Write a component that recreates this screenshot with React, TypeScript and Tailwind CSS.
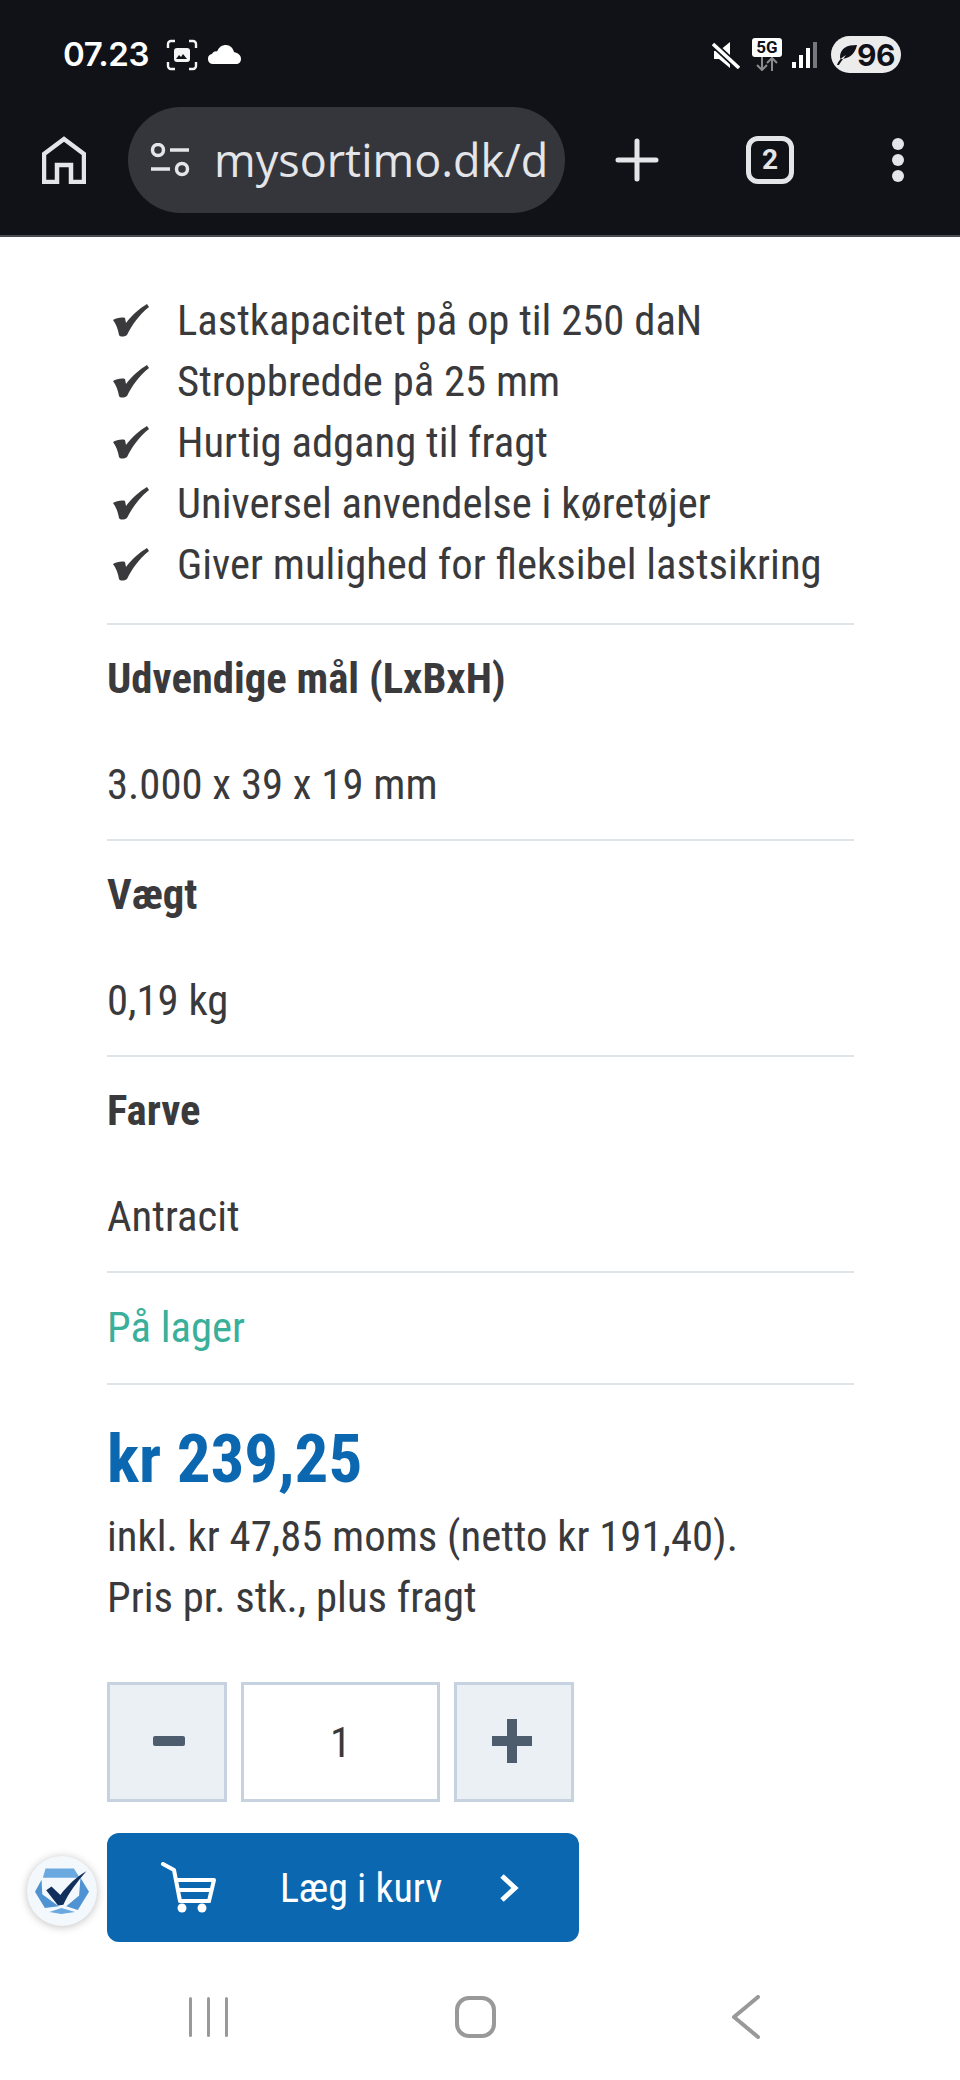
const FONT = "font-['Roboto',sans-serif] [font-stretch:75%]"

const FEATURES = [
  'Lastkapacitet på op til 250 daN',
  'Stropbredde på 25 mm',
  'Hurtig adgang til fragt',
  'Universel anvendelse i køretøjer',
  'Giver mulighed for fleksibel lastsikring',
]

const SPECS = [
  { label: 'Udvendige mål (LxBxH)', value: '3.000 x 39 x 19 mm' },
  { label: 'Vægt', value: '0,19 kg' },
  { label: 'Farve', value: 'Antracit' },
]

function StatusBar() {
  return (
    <div className="h-[107px] flex items-center justify-between pl-[63px] pr-[59px] pt-[2px] text-white">
      <div className="flex items-center">
        <span className="font-['Inter',sans-serif] text-[33px] font-semibold tracking-[-0.4px]">07.23</span>
        <svg width="32" height="32" viewBox="0 0 32 32" className="ml-[17px]" fill="none" stroke="#f4f4f5" strokeWidth="2.4">
          <path d="M2 9V5a3 3 0 0 1 3-3h4M23 2h4a3 3 0 0 1 3 3v4M30 23v4a3 3 0 0 1-3 3h-4M9 30H5a3 3 0 0 1-3-3v-4" />
          <rect x="8" y="9" width="16" height="14" rx="3" fill="#f4f4f5" stroke="none" />
          <path d="M10 20l3-4 2 2 2-3 4 5z" fill="#101217" stroke="none" />
        </svg>
        <svg width="33" height="19" viewBox="0 0 33 19" className="ml-[10px]" fill="#fff">
          <path d="M5 19a5 5 0 0 1-1-9.900C5 7 7 6 9 6.500 11 2 14 0 18 0c4 0 7 3 8 7 4 1 7 3 7 7 0 3-2 5-5 5z" />
        </svg>
      </div>
      <div className="flex items-center">
        <svg width="28" height="28" viewBox="0 0 28 28" fill="#fff">
          <path d="M2 10h5l11-9v26L7 18H2z" />
          <path d="M1 3l26 24" stroke="#101217" strokeWidth="7" />
          <path d="M1 3l26 24" stroke="#fff" strokeWidth="3.500" />
        </svg>
        <div className="ml-[12px] flex flex-col items-center w-[30px]">
          <span className="w-[30px] h-[19px] bg-white rounded-[3px] text-[#101217] text-[17px] leading-[19px] font-bold text-center font-['Roboto',sans-serif]">5G</span>
          <svg width="24" height="14" viewBox="0 0 24 14" fill="none" strokeWidth="2">
            <path d="M7 0v12M2 8l5 5 5-5" stroke="#8a8b8e" />
            <path d="M17 14V2M12 6l5-5 5 5" stroke="#8a8b8e" />
          </svg>
        </div>
        <svg width="25" height="26" viewBox="0 0 25 26" className="ml-[10px]">
          <rect x="0" y="20" width="4" height="6" fill="#fff" />
          <rect x="7" y="13" width="4" height="13" fill="#fff" />
          <rect x="14" y="6" width="4" height="20" fill="#fff" />
          <rect x="21" y="0" width="4" height="26" fill="#77787b" />
        </svg>
        <div className="ml-[14px] w-[70px] h-[37px] rounded-full bg-[#ececec] flex items-center justify-center">
          <svg width="20" height="20" viewBox="0 0 20 20" fill="#101217">
            <path d="M20 0C10 0 4 3 3 11c0 1 0 2 .500 3C12 14 18 9 20 0zM0 20c1-4 4-7 9-10-2 3-5 6-7 10z" />
          </svg>
          <span className="font-['Inter',sans-serif] text-[30px] font-bold text-[#101217] leading-none tracking-[-0.5px]">96</span>
        </div>
      </div>
    </div>
  )
}

function Toolbar() {
  return (
    <div className="h-[130px] flex items-start border-b-[2px] border-[#4a4b50]">
      <div className="w-[128px] h-[106px] flex items-center justify-center">
        <svg width="44" height="48" viewBox="0 0 44 48" fill="none" stroke="#e4e5e9" strokeWidth="4.500">
          <path d="M2 46V18L22 3l20 15v28H29V29H15v17z" />
        </svg>
      </div>
      <div className="w-[437px] h-[106px] rounded-full bg-[#35363b] flex items-center overflow-hidden pl-[22px]">
        <svg width="40" height="34" viewBox="0 0 40 34" fill="none" stroke="#e4e5e9" strokeWidth="3.500" className="shrink-0">
          <circle cx="8" cy="7" r="5.500" />
          <path d="M20 7h19M1 26h19" />
          <circle cx="32" cy="26" r="5.500" />
        </svg>
        <span className="ml-[24px] font-['Open_Sans',sans-serif] text-[45px] text-[#e4e5e9] whitespace-nowrap">mysortimo.dk/d</span>
      </div>
      <div className="flex-1 h-[106px] flex items-center">
        <svg width="44" height="44" viewBox="0 0 44 44" className="ml-[50px]" stroke="#e4e5e9" strokeWidth="5" strokeLinecap="round">
          <path d="M22 3v38M3 22h38" />
        </svg>
        <div className="ml-[87px] w-[48px] h-[48px] rounded-[12px] border-[5px] border-[#e4e5e9] flex items-center justify-center font-['Roboto',sans-serif] text-[28px] font-bold text-[#e4e5e9]">2</div>
        <div className="ml-[98px] flex flex-col gap-[4px]">
          <span className="w-[12px] h-[12px] rounded-full bg-[#e4e5e9]" />
          <span className="w-[12px] h-[12px] rounded-full bg-[#e4e5e9]" />
          <span className="w-[12px] h-[12px] rounded-full bg-[#e4e5e9]" />
        </div>
      </div>
    </div>
  )
}

function Spec({ label, value }: { label: string; value: string }) {
  return (
    <div className="border-b-[2px] border-[#dfe4e8] pt-[23px] pb-[24px]">
      <div className="font-bold">{label}</div>
      <div className="mt-[45px]">{value}</div>
    </div>
  )
}

export default function App() {
  return (
    <div className="relative w-[960px] h-[2080px] bg-white overflow-hidden flex flex-col">
      <div className="bg-[#101217]">
        <StatusBar />
        <Toolbar />
      </div>

      <div className={`flex-1 pl-[107px] pr-[106px] pt-[53px] text-[#3a3a3c] text-[42.7px] leading-[61px] ${FONT}`}>
        <ul className="border-b-[2px] border-[#dfe4e8] pb-[28px]">
          {FEATURES.map(f => (
            <li key={f} className="flex items-center whitespace-nowrap">
              <span className="w-[70px] pl-[6px]">
                <svg width="36" height="33" viewBox="0 0 36 33" className="block" fill="#3a3a3c">
                  <path d="M0 16C3 14 9 13 12 14L13 19C19 11 27 4 34 0L36 3C26 11 19 21 14 31C11 33 7 33 6 31C5 25 3 20 0 16Z" />
                </svg>
              </span>
              {f}
            </li>
          ))}
        </ul>
        {SPECS.map(s => (
          <Spec key={s.label} label={s.label} value={s.value} />
        ))}
        <div className="border-b-[2px] border-[#dfe4e8] pt-[24px] pb-[25px] text-[#3aaf9a]">På lager</div>

        <div className="mt-[38px] text-[67px] leading-[72px] font-bold text-[#0a67b0]">kr 239,25</div>
        <div className="mt-[11px]">inkl. kr 47,85 moms (netto kr 191,40).</div>
        <div>Pris pr. stk., plus fragt</div>

        <div className="mt-[54px] flex gap-[14px]">
          <button className="w-[120px] h-[120px] bg-[#ebf0f5] border-[3px] border-[#c6d2e0] flex items-center justify-center">
            <span className="ml-[3px] mb-[2px] w-[32px] h-[10px] rounded-[2px] bg-[#4e5d6e]" />
          </button>
          <div className="w-[199px] h-[120px] border-[3px] border-[#c6d2e0] flex items-center justify-center">1</div>
          <button className="w-[120px] h-[120px] bg-[#ebf0f5] border-[3px] border-[#c6d2e0] flex items-center justify-center">
            <svg width="40" height="44" viewBox="0 0 40 44" className="mr-[4px] mb-[2px]" fill="#4e5d6e">
              <path d="M15 0h10v17h15v10H25v17H15V27H0V17h15z" />
            </svg>
          </button>
        </div>

        <button className="mt-[31px] w-[472px] h-[109px] rounded-[12px] bg-[#0a67b0] text-white flex items-center">
          <svg width="56" height="52" viewBox="0 0 56 52" className="ml-[53px] shrink-0" fill="none" stroke="#fff" strokeWidth="4" strokeLinecap="round" strokeLinejoin="round">
            <path d="M3 2L14 8L20 39H49" />
            <path d="M17 18H54L49 39M19 28H51" />
            <circle cx="22" cy="46" r="4.500" fill="#fff" stroke="none" />
            <circle cx="42" cy="46" r="4.500" fill="#fff" stroke="none" />
          </svg>
          <span className="ml-[64px] pt-[2px] text-[40px] whitespace-nowrap">Læg i kurv</span>
          <svg width="22" height="30" viewBox="0 0 22 30" className="ml-[56px] shrink-0" fill="none" stroke="#fff" strokeWidth="5">
            <path d="M4 3l13 12L4 27" />
          </svg>
        </button>
      </div>

      {/* floating trust badge */}
      <div className="absolute left-[27px] top-[1856px] w-[70px] h-[70px] rounded-full bg-[#f3f8fc] shadow-[0_1px_8px_rgba(0,0,0,0.25)] flex items-center justify-center">
        <svg width="54" height="48" viewBox="0 0 164 140">
          <path d="M32 2H118L136 30H24Z" fill="#6aa8e0" />
          <path d="M20 36L0 72L30 122L72 116L22 80Z" fill="#4f93d2" />
          <path d="M138 30L164 72L130 128L95 116L134 84Z" fill="#4f93d2" />
          <path d="M44 134L80 122L122 134L80 140Z" fill="#6aa8e0" />
          <path d="M34 68L50 56L77 82C100 52 125 28 156 10C128 42 102 76 86 112L70 114Z" fill="#12305c" />
        </svg>
      </div>

      <div className="h-[42px] mb-[42px] flex items-center">
        <div className="ml-[189px] flex gap-[15px]">
          <span className="w-[3px] h-[40px] rounded-full bg-[#999]" />
          <span className="w-[3px] h-[40px] rounded-full bg-[#999]" />
          <span className="w-[3px] h-[40px] rounded-full bg-[#999]" />
        </div>
        <div className="ml-[227px] w-[41px] h-[42px] rounded-[14px] border-[4px] border-[#999]" />
        <svg width="30" height="44" viewBox="0 0 30 44" className="ml-[235px]" fill="none" stroke="#999" strokeWidth="4" strokeLinecap="round" strokeLinejoin="round">
          <path d="M27 2L3 22l24 20" />
        </svg>
      </div>
    </div>
  )
}
